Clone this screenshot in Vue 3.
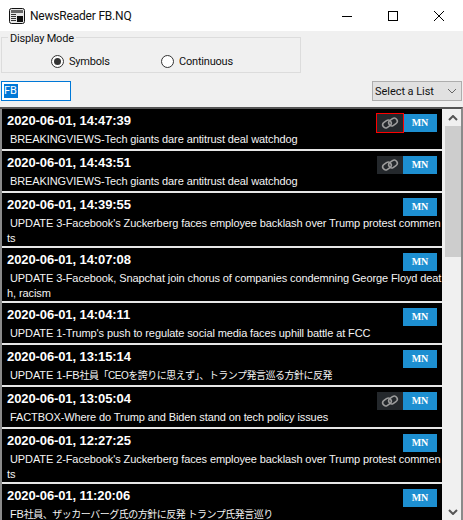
<script setup>
const rows = [
  { t: '2020-06-01, 14:47:39', h: 'BREAKINGVIEWS-Tech giants dare antitrust deal watchdog', link: 'active', tall: false },
  { t: '2020-06-01, 14:43:51', h: 'BREAKINGVIEWS-Tech giants dare antitrust deal watchdog', link: 'on', tall: false },
  { t: '2020-06-01, 14:39:55', h: "UPDATE 3-Facebook's Zuckerberg faces employee backlash over Trump protest comments", tall: true },
  { t: '2020-06-01, 14:07:08', h: 'UPDATE 3-Facebook, Snapchat join chorus of companies condemning George Floyd death, racism', tall: true },
  { t: '2020-06-01, 14:04:11', h: "UPDATE 1-Trump's push to regulate social media faces uphill battle at FCC", tall: false },
  { t: '2020-06-01, 13:15:14', h: 'UPDATE 1-FB', jp: '社員「CEOを誇りに思えず」、トランプ発言巡る方針に反発', tall: false },
  { t: '2020-06-01, 13:05:04', h: 'FACTBOX-Where do Trump and Biden stand on tech policy issues', link: 'on', tall: false },
  { t: '2020-06-01, 12:27:25', h: "UPDATE 2-Facebook's Zuckerberg faces employee backlash over Trump protest comments", tall: true },
  { t: '2020-06-01, 11:20:06', h: 'FB', jp: '社員、ザッカーバーグ氏の方針に反発 トランプ氏発言巡り', tall: false },
]
</script>

<template>
  <div class="win">
    <header class="title">
      <svg class="appicon" width="16" height="16" viewBox="0 0 16 16">
        <rect x="0.5" y="0.5" width="15" height="15" rx="2" fill="#e8e8e8" stroke="#111" />
        <rect x="2" y="2" width="12" height="3" fill="#666" />
        <rect x="2" y="6" width="5" height="1" fill="#333" />
        <rect x="2" y="8" width="5" height="1" fill="#333" />
        <rect x="2" y="10" width="5" height="1" fill="#333" />
        <rect x="2" y="12" width="5" height="1" fill="#333" />
        <rect x="8" y="8" width="6" height="6" fill="#111" />
      </svg>
      <span class="name">NewsReader FB.NQ</span>
      <div class="caps">
        <svg width="12" height="12" viewBox="0 0 12 12"><path d="M1 6.5h10" stroke="#000" fill="none" /></svg>
        <svg width="12" height="12" viewBox="0 0 12 12"><rect x="1.5" y="1.5" width="9" height="9" stroke="#000" fill="none" /></svg>
        <svg width="12" height="12" viewBox="0 0 12 12"><path d="M1 1l10 10M11 1L1 11" stroke="#000" fill="none" /></svg>
      </div>
    </header>

    <main class="client">
      <div class="mode">
        <span class="legend">Display Mode</span>
        <label class="radio first"><span class="dot on"></span>Symbols</label>
        <label class="radio"><span class="dot"></span>Continuous</label>
      </div>

      <div class="tools">
        <div class="input"><span class="sel">FB</span></div>
        <div class="select">
          <span>Select a List</span>
          <svg width="10" height="6" viewBox="0 0 10 6"><path d="M1 1l4 4 4-4" stroke="#666" fill="none" /></svg>
        </div>
      </div>

      <section class="list">
        <div class="rows">
          <article v-for="r in rows" :key="r.t" class="row" :class="{ tall: r.tall }">
            <div class="top">
              <span class="time">{{ r.t }}</span>
              <div class="btns">
                <span v-if="r.link" class="link" :class="{ active: r.link === 'active' }">
                  <svg width="18" height="14" viewBox="0 0 18 14">
                    <g fill="none" stroke="#9c9c9c" stroke-width="1.6">
                      <rect x="1.5" y="5" width="9" height="6" rx="3" transform="rotate(-35 6 8)" />
                      <rect x="7.5" y="3" width="9" height="6" rx="3" transform="rotate(-35 12 6)" />
                    </g>
                  </svg>
                </span>
                <span class="mn">MN</span>
              </div>
            </div>
            <p class="head"><span class="ind"></span>{{ r.h }}<span v-if="r.jp" class="jp">{{ r.jp }}</span></p>
          </article>
        </div>
        <aside class="scroll">
          <svg class="arr" width="10" height="6" viewBox="0 0 10 6"><path d="M1 5l4-4 4 4" stroke="#555" stroke-width="2" fill="none" /></svg>
          <div class="thumb"></div>
          <svg class="arr" width="10" height="6" viewBox="0 0 10 6"><path d="M1 1l4 4 4-4" stroke="#555" stroke-width="2" fill="none" /></svg>
        </aside>
      </section>
    </main>
  </div>
</template>

<style>
html, body { margin: 0; background: #f0f0f0; }
</style>

<style scoped>
.win {
  width: 463px;
  height: 520px;
  overflow: hidden;
  font-family: Roboto, "Noto Sans", sans-serif;
  font-size: 11px;
  color: #111;
  display: flex;
  flex-direction: column;
  background: #f0f0f0;
}
.title {
  height: 31px;
  flex: none;
  background: #fff;
  display: flex;
  align-items: center;
  padding-left: 9px;
}
.name { margin-left: 5px; font-size: 12px; letter-spacing: -0.2px; }
.caps { margin-left: auto; display: flex; gap: 34px; padding-right: 18px; }
.client { flex: 1; min-height: 0; display: flex; flex-direction: column; }
.mode {
  position: relative;
  margin: 6px 0 0 1px;
  width: 300px;
  height: 36px;
  box-sizing: border-box;
  border: 1px solid #dcdcdc;
  padding: 12px 0 0 49px;
  display: flex;
  align-items: center;
  letter-spacing: -0.2px;
}
.legend {
  position: absolute;
  left: 6px;
  top: -6px;
  padding: 0 2px;
  background: #f0f0f0;
  line-height: 14px;
}
.radio { display: flex; align-items: center; gap: 5px; width: 110px; }
.dot {
  width: 11px;
  height: 11px;
  border: 1px solid #333;
  border-radius: 50%;
  background: #fff;
  position: relative;
  flex: none;
}
.dot.on::after {
  content: "";
  position: absolute;
  inset: 2px;
  border-radius: 50%;
  background: #333;
}
.tools {
  display: flex;
  justify-content: space-between;
  padding: 8px 1px 0 1px;
  height: 20px;
}
.input {
  width: 70px;
  height: 20px;
  box-sizing: border-box;
  border: 1px solid #0078d7;
  background: #fff;
  padding: 2px 0 0 2px;
  line-height: 14px;
}
.sel { background: #0078d7; color: #fff; display: inline-block; padding-right: 1px; }
.select {
  width: 90px;
  height: 20px;
  box-sizing: border-box;
  border: 1px solid #adadad;
  background: #e1e1e1;
  display: flex;
  align-items: center;
  justify-content: space-between;
  padding: 0 4px 0 2px;
  letter-spacing: -0.05px;
}
.list {
  margin-top: 6px;
  flex: 1;
  min-height: 0;
  display: flex;
  border-top: 2px solid #555;
  border-right: 2px solid #8a8a8a;
  background: #f0f0f0;
}
.rows {
  width: 442px;
  flex: none;
  overflow: hidden;
  background: #e6e6e6;
  border-left: 2px solid #8a8a8a;
  box-sizing: border-box;
}
.row {
  height: 40px;
  box-sizing: border-box;
  background: #000;
  color: #fff;
  margin-bottom: 2px;
  padding: 3px 0 0 5px;
  font-family: "Liberation Sans", Arial, "Noto Sans CJK JP", sans-serif;
}
.row.tall { height: 53px; }
.top { display: flex; justify-content: space-between; height: 20px; }
.time { font-size: 13px; font-weight: 700; line-height: 18px; letter-spacing: -0.1px; }
.btns { display: flex; padding-right: 5px; margin-top: 2px; }
.link {
  position: relative;
  z-index: 1;
  width: 26px;
  height: 18px;
  box-sizing: border-box;
  background: #24282c;
  display: flex;
  align-items: center;
  justify-content: center;
}
.link.active { outline: 1px solid #f00; }
.mn {
  width: 34px;
  height: 18px;
  background: #1d8fd1;
  color: #fff;
  text-align: center;
  font: 700 10px/18px "Liberation Serif", serif;
}
.head {
  margin: 0;
  font-size: 11px;
  letter-spacing: -0.1px;
  line-height: 15px;
  word-break: break-all;
  color: #f4f4f4;
}
.jp { font-size: 10px; letter-spacing: -0.5px; }
.ind { display: inline-block; width: 3px; }
.scroll {
  width: 16px;
  margin-left: 3px;
  flex: none;
  background: #f0f0f0;
  display: flex;
  flex-direction: column;
  align-items: center;
}
.arr { flex: none; margin: 6px 0 5px; }
.thumb { width: 100%; height: 131px; background: #cdcdcd; margin-bottom: auto; }
</style>
